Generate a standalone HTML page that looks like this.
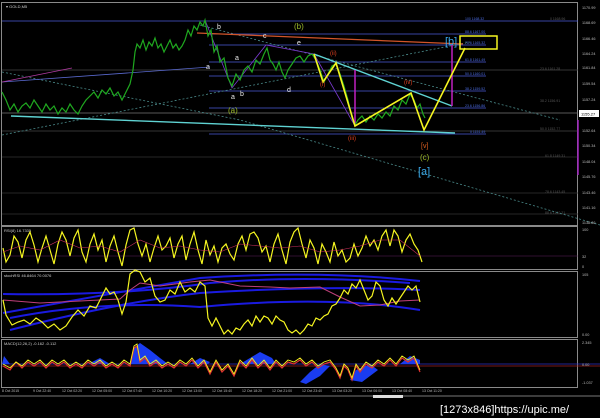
<!DOCTYPE html>
<html><head><style>
html,body{margin:0;padding:0;background:#000;width:600px;height:418px;overflow:hidden}
svg{display:block}
text{font-family:"Liberation Sans",sans-serif}
</style></head><body>
<svg width="600" height="418" viewBox="0 0 600 418" xmlns="http://www.w3.org/2000/svg">
<rect width="600" height="418" fill="#000"/>
<!-- panel borders -->
<g stroke="#8a8a8a" stroke-width="1" fill="none">
<rect x="1.5" y="2.5" width="576" height="223"/>
<rect x="1.5" y="226.5" width="576" height="43"/>
<rect x="1.5" y="271.5" width="576" height="66"/>
<rect x="1.5" y="339.5" width="576" height="48"/>
</g>
<line x1="0" y1="396" x2="600" y2="396" stroke="#777"/>
<rect x="373" y="395" width="30" height="3" fill="#ddd"/>
<!-- price grid lines -->
<g stroke="#333" stroke-width="0.7">
<line x1="2" y1="157" x2="578" y2="157"/>
<line x1="2" y1="193" x2="578" y2="193"/>
<line x1="2" y1="214" x2="578" y2="214"/>
<line x1="2" y1="113" x2="578" y2="113" stroke="#777"/>
<line x1="2" y1="131" x2="578" y2="131" stroke="#444"/>
<line x1="2" y1="70" x2="578" y2="70" stroke="#444"/>
</g>
<!-- fib lines -->
<g stroke="#4a5bd8" stroke-width="0.8">
<line x1="2" y1="21" x2="578" y2="21"/>
<line x1="209" y1="34" x2="486" y2="34"/>
<line x1="209" y1="45" x2="486" y2="45"/>
<line x1="209" y1="62" x2="486" y2="62"/>
<line x1="209" y1="76" x2="486" y2="76"/>
<line x1="209" y1="91" x2="486" y2="91"/>
<line x1="209" y1="108" x2="486" y2="108"/>
<line x1="209" y1="134" x2="486" y2="134"/>
</g>
<g font-size="3.5" fill="#4a6be0">
<text x="465" y="20">100 1168.32</text><text x="465" y="33">88.6 1167.00</text><text x="465" y="44">78.6 1165.32</text>
<text x="465" y="61">61.8 1161.49</text><text x="465" y="75">50.0 1160.01</text><text x="465" y="90">38.2 1159.52</text>
<text x="465" y="107">23.6 1156.86</text><text x="470" y="133">0 1151.49</text>
<text x="550" y="20" fill="#555">0 1168.96</text><text x="540" y="70" fill="#555">23.6 1161.28</text>
<text x="540" y="102" fill="#555">38.2 1156.91</text><text x="540" y="130" fill="#555">50.0 1152.77</text>
<text x="545" y="157" fill="#555">61.8 1149.31</text><text x="545" y="193" fill="#555">78.6 1143.45</text><text x="545" y="214" fill="#555">88.6 1140.21</text>
</g>
<!-- dotted trend lines -->
<g stroke="#4a8a8a" stroke-width="0.8" stroke-dasharray="2,2" fill="none">
<polyline points="2,72 240,120 600,225"/>
<polyline points="200,25 560,120"/>
<polyline points="2,135 470,42"/>
</g>
<line x1="2" y1="82" x2="210" y2="67" stroke="#5a6ad0" stroke-width="0.8"/>
<line x1="2" y1="82" x2="72" y2="68" stroke="#b03aa0" stroke-width="0.8"/>
<!-- red line -->
<line x1="197" y1="33" x2="463" y2="44" stroke="#d2552a" stroke-width="1.2"/>
<!-- cyan lines -->
<line x1="11" y1="116" x2="455" y2="133" stroke="#5fd3d3" stroke-width="1.4"/>
<line x1="314" y1="54" x2="452" y2="106" stroke="#5fd3d3" stroke-width="1.4"/>
<!-- magenta verticals -->
<line x1="452" y1="45" x2="452" y2="106" stroke="#c020c0" stroke-width="1.5"/>
<line x1="355" y1="70" x2="355" y2="126" stroke="#c020c0" stroke-width="1.5"/>
<line x1="578" y1="120" x2="578" y2="175" stroke="#a020c0" stroke-width="1.5"/>
<!-- purple zigzag -->
<polyline points="205,20 232,88 266,45 314,54 355,126" fill="none" stroke="#7a3ad0" stroke-width="0.8"/>
<!-- green price -->
<polyline fill="none" stroke="#1fa81f" stroke-width="1.2" points="2,92 6,100 10,110 14,104 18,112 22,106 26,103 30,108 34,100 38,106 42,112 46,104 50,110 54,106 58,114 62,108 66,112 70,104 74,110 78,114 82,106 86,100 90,96 94,92 98,98 102,90 106,94 110,88 114,96 118,92 122,100 126,92 130,84 133,70 135,52 137,44 140,48 143,40 146,50 149,42 152,46 155,38 158,48 161,44 164,52 167,46 170,40 173,48 176,44 179,50 182,46 185,40 188,30 191,36 194,26 197,30 200,22 203,26 205,20 208,36 211,30 214,52 217,46 220,62 224,58 228,78 232,86 236,74 240,80 244,70 248,66 252,72 256,60 260,64 264,54 267,48 270,60 273,64 276,70 279,62 282,72 285,78 288,70 292,64 296,58 300,56 304,62 308,56 312,54 316,60 320,70 324,82 328,74 332,66 336,64 340,74 344,86 348,100 352,118 355,125 358,120 362,116 366,122 370,116 374,120 378,114 382,118 386,112 390,116 394,106 398,110 402,100 406,104 410,94 414,100 417,108 420,104 423,114 425,118"/>
<!-- yellow -->
<polyline fill="none" stroke="#f5f520" stroke-width="1.6" points="314,54 323,82 336,63 355,126 411,93 424,130 465,48"/>
<rect x="460" y="36" width="37" height="13" fill="none" stroke="#f5f520" stroke-width="1.5"/>
<!-- labels -->
<g font-family="Liberation Serif" font-size="8">
<text x="294" y="29" fill="#9ab82a">(b)</text>
<text x="445" y="45" fill="#3aa8e8" font-size="11">[b]</text>
<text x="228" y="113" fill="#9ab82a">(a)</text>
<text x="420" y="160" fill="#9ab82a">(c)</text>
<text x="418" y="175" fill="#3aa8e8" font-size="11">[a]</text>
<text x="421" y="148" fill="#e06020" font-size="7">[v]</text>
<text x="348" y="140" fill="#e04020" font-size="6">(iii)</text>
<text x="404" y="84" fill="#e04020" font-size="6">(iv)</text>
<text x="330" y="55" fill="#e04020" font-size="6">(ii)</text>
<text x="320" y="86" fill="#e04020" font-size="6">(i)</text>
<g fill="#e8e8e8" font-size="7">
<text x="217" y="29">b</text><text x="263" y="38">c</text><text x="297" y="45">e</text>
<text x="235" y="60">a</text><text x="206" y="69">a</text><text x="287" y="92">d</text>
<text x="231" y="99">a</text><text x="240" y="96">b</text>
</g></g>
<text x="6" y="8" font-size="4" fill="#ccc">▾ GOLD,M5</text>
<!-- price axis -->
<g font-size="3.8" fill="#bbb">
<text x="582" y="9">1170.99</text><text x="582" y="24">1168.69</text><text x="582" y="40">1166.46</text>
<text x="582" y="55">1164.24</text><text x="582" y="69">1161.84</text><text x="582" y="85">1159.54</text>
<text x="582" y="101">1157.24</text><text x="582" y="132">1152.64</text><text x="582" y="147">1150.34</text>
<text x="582" y="163">1148.04</text><text x="582" y="178">1145.76</text><text x="582" y="194">1143.46</text>
<text x="582" y="209">1141.16</text><text x="582" y="224">1138.86</text>
</g>
<rect x="579" y="110" width="20" height="7" fill="#fff"/>
<text x="581" y="115.5" font-size="4" fill="#000">1155.27</text>
<!-- RSI -->
<line x1="2" y1="256" x2="578" y2="256" stroke="#602060" stroke-width="0.6"/>
<text x="4" y="232" font-size="4" fill="#ccc">RSI(8) 16.7335</text>
<polyline fill="none" stroke="#f5f520" stroke-width="1.2" points="3,248 6,262 10,255 14,236 18,242 22,258 26,240 30,232 34,245 38,262 42,248 46,236 50,250 54,264 58,244 62,232 66,240 70,256 74,238 78,230 82,252 86,262 90,244 94,234 98,250 102,240 106,262 110,246 114,236 118,252 122,266 126,245 130,230 134,228 138,244 142,256 146,244 150,262 154,248 158,236 162,250 166,246 170,238 174,258 178,244 182,236 186,260 190,244 194,232 198,250 202,264 206,240 210,255 214,246 218,262 222,248 226,244 230,254 234,260 238,244 242,236 246,250 250,234 254,232 258,238 262,252 266,246 270,262 274,244 278,234 282,250 286,264 290,242 294,232 298,228 302,244 306,258 310,240 314,248 318,264 322,244 326,252 330,262 334,242 338,256 342,250 346,262 350,258 354,244 358,256 362,248 366,236 370,246 374,240 378,250 382,236 386,230 390,246 394,230 398,236 402,252 406,240 410,234 414,244 418,250 422,262"/>
<polyline fill="none" stroke="#d03060" stroke-width="0.6" points="3,252 20,246 40,250 60,240 80,248 100,246 120,252 140,240 160,248 180,246 200,250 220,252 240,244 260,246 280,248 300,246 320,252 340,250 360,246 380,240 400,240 420,256"/>
<g font-size="3.8" fill="#bbb"><text x="582" y="231">100</text><text x="582" y="258">32</text><text x="582" y="268">0</text></g>
<!-- Stoch -->
<text x="4" y="277" font-size="4" fill="#ccc">stochRSI 46.8464 70.0076</text>
<g fill="none" stroke="#1a1ae0" stroke-width="2">
<path d="M3,294 Q120,296 210,283 Q300,275 410,283"/>
<path d="M3,313 Q100,296 200,278 Q320,270 420,281"/>
<path d="M10,318 Q100,300 200,307 Q330,295 420,310"/>
<path d="M10,330 Q120,302 200,293 Q330,285 420,290"/>
</g>
<polyline fill="none" stroke="#c0407a" stroke-width="1" points="3,300 40,303 80,301 120,299 130,290 140,283 160,286 190,282 210,280 240,286 270,287 290,288 320,287 340,297 360,306 380,305 400,301 420,300"/>
<polyline fill="none" stroke="#f5f520" stroke-width="1.2" points="3,300 6,315 12,325 18,322 24,320 30,324 36,318 42,322 48,328 54,324 60,330 66,326 72,317 78,310 84,316 90,306 96,308 102,296 106,288 110,294 114,292 118,300 122,314 126,302 130,274 135,270 140,272 145,282 150,278 155,296 160,302 165,300 170,290 175,294 180,282 185,292 190,288 195,292 200,282 205,286 208,318 212,326 216,318 220,326 224,334 228,330 232,334 236,328 240,330 244,324 248,320 252,326 256,316 260,322 264,316 268,318 272,324 276,316 280,320 284,322 288,330 292,333 296,330 300,334 304,330 308,324 312,326 316,318 320,320 324,316 328,314 332,306 336,304 340,298 344,290 348,294 352,284 356,288 360,280 364,290 368,300 372,296 376,282 380,286 384,300 388,306 392,298 396,304 400,298 404,292 408,286 412,290 416,286 420,302"/>
<g font-size="3.8" fill="#bbb"><text x="582" y="276">105</text><text x="582" y="336">0.00</text></g>
<!-- MACD -->
<text x="4" y="345" font-size="4" fill="#ccc">MACD(12,26,2) -0.162 -0.112</text>
<line x1="2" y1="364" x2="600" y2="364" stroke="#3030c0" stroke-width="0.8"/>
<line x1="2" y1="366" x2="600" y2="366" stroke="#a02020" stroke-width="0.8"/>
<path fill="#1a3cf0" d="M130,364 L134,348 L140,343 L150,350 L160,358 L168,364 Z M240,364 L250,358 L260,352 L272,358 L276,364 Z M320,364 L310,372 L300,382 L306,384 L320,376 L330,366 Z M88,364 L100,358 L110,364 Z M190,364 L200,358 L210,362 L208,364 Z M370,364 L356,370 L350,380 L362,382 L378,370 Z M400,364 L410,356 L420,360 L420,364 Z M2,364 L4,356 L10,364 Z"/>
<polyline fill="none" stroke="#e03030" stroke-width="1.2" points="3,366 10,370 16,362 22,368 28,362 34,366 40,362 46,368 52,362 58,366 64,362 70,368 76,364 82,368 88,362 94,366 100,362 106,368 112,364 118,368 124,362 130,366 134,348 137,346 140,362 145,358 150,366 156,362 162,368 168,364 174,368 180,362 186,366 192,360 198,368 204,362 210,374 216,362 222,372 228,366 234,376 240,362 246,368 252,360 258,368 264,362 270,370 276,362 282,368 288,362 294,364 300,360 306,366 312,362 318,368 324,364 330,362 336,370 340,378 344,366 348,370 352,380 356,366 360,372 366,364 372,368 378,362 384,366 390,360 396,366 402,358 408,362 414,358 420,372"/>
<polyline fill="none" stroke="#f5f520" stroke-width="0.9" points="3,364 10,368 16,362 22,366 28,360 34,364 40,360 46,366 52,360 58,364 64,360 70,366 76,362 82,366 88,360 94,364 100,360 106,366 112,362 118,366 124,360 130,364 134,346 137,344 140,360 145,356 150,364 156,360 162,366 168,362 174,366 180,360 186,364 192,358 198,366 204,360 210,372 216,360 222,370 228,364 234,374 240,360 246,366 252,358 258,366 264,360 270,368 276,360 282,366 288,360 294,362 300,358 306,364 312,360 318,366 324,362 330,360 336,368 340,376 344,364 348,368 352,378 356,364 360,370 366,362 372,366 378,360 384,364 390,358 396,364 402,356 408,360 414,356 420,370"/>
<g font-size="3.8" fill="#bbb"><text x="582" y="344">2.345</text><text x="582" y="366">0.00</text><text x="582" y="384">-1.037</text></g>
<!-- time axis -->
<g font-size="3.5" fill="#bbb">
<text x="2" y="392">8 Oct 2015</text><text x="33" y="392">9 Oct 22:40</text><text x="62" y="392">12 Oct 02:20</text>
<text x="92" y="392">12 Oct 05:00</text><text x="122" y="392">12 Oct 07:40</text><text x="152" y="392">12 Oct 10:20</text>
<text x="182" y="392">12 Oct 13:00</text><text x="212" y="392">12 Oct 15:40</text><text x="242" y="392">12 Oct 18:20</text>
<text x="272" y="392">12 Oct 21:00</text><text x="302" y="392">12 Oct 23:40</text><text x="332" y="392">13 Oct 03:20</text>
<text x="362" y="392">13 Oct 06:00</text><text x="392" y="392">13 Oct 08:40</text><text x="422" y="392">13 Oct 11:20</text>
</g>
<text x="440" y="413" font-size="11" fill="#fff" font-family="Liberation Mono,monospace">[1273x846]https://upic.me/</text>
</svg>
</body></html>
